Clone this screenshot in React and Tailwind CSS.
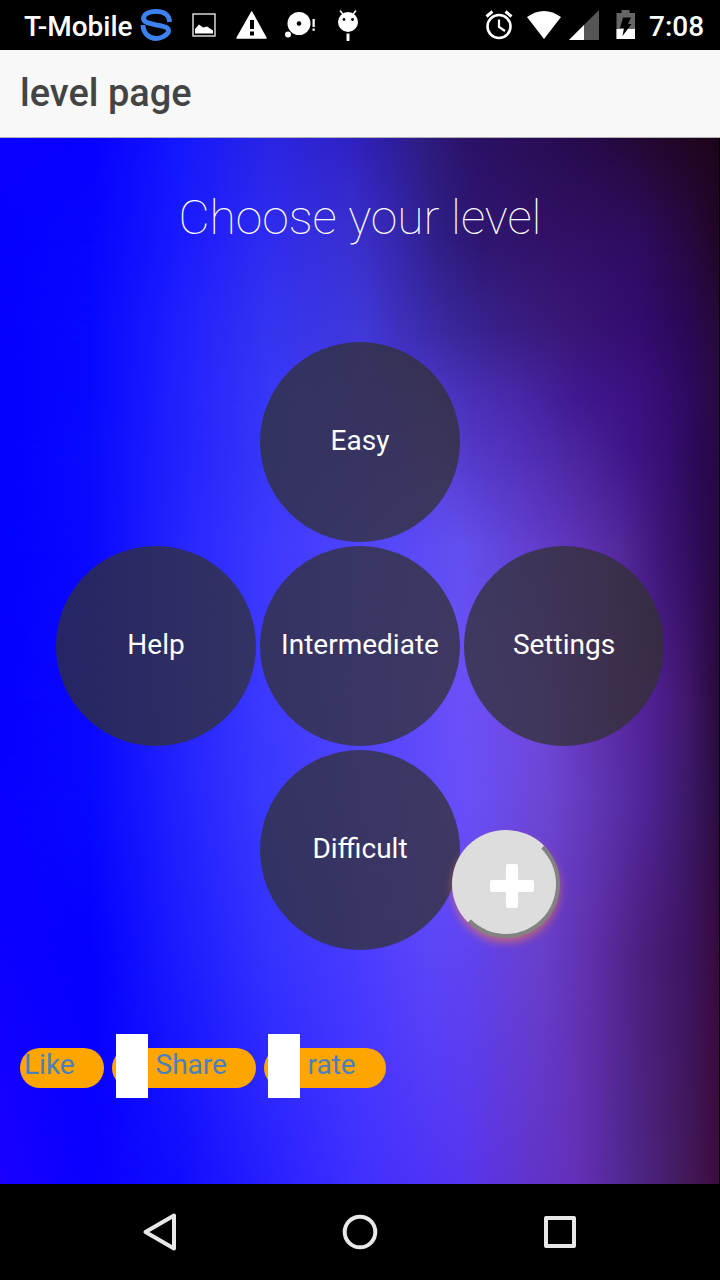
const rows = [
  { from: 0, at: 0, stops: '#0a00ff 0px,#0700ff 90px,#1418ff 180px,#2a25e4 270px,#3022c4 350px,#2e1ea0 390px,#2e1c80 425px,#2b1268 470px,#290d56 540px,#260a48 600px,#240830 650px,#20051f 700px,#1c041a 720px' },
  { from: 0, at: 100, stops: '#0500ff 0px,#0705ff 90px,#1a1aff 180px,#302cf0 270px,#3a30d0 350px,#3628b0 395px,#301f88 435px,#2e1670 480px,#321268 540px,#2e0c60 640px,#280840 690px,#200625 720px' },
  { from: 100, at: 192, stops: '#0500ff 0px,#0808ff 90px,#2020ff 180px,#3535f0 270px,#4038d8 365px,#3f30bc 400px,#3a289c 450px,#382088 500px,#3a1878 560px,#340c70 640px,#2a0855 690px,#260a38 720px' },
  { from: 192, at: 260, stops: '#0300ff 0px,#0808ff 90px,#2222ff 180px,#3838f8 270px,#4838e8 370px,#4c38cc 430px,#4a30b8 470px,#4828a8 520px,#401890 580px,#3c1080 640px,#2e0a60 690px,#280a40 720px' },
  { from: 260, at: 312, stops: '#0300ff 0px,#0a0aff 90px,#2222fe 180px,#3838f8 270px,#4c3cf0 370px,#5840d8 440px,#5438c8 470px,#5030b8 520px,#4a249c 580px,#401488 630px,#360e70 670px,#2a0854 700px,#280840 720px' },
  { from: 312, at: 412, stops: '#0300ff 0px,#0a08ff 90px,#2525ff 180px,#3c38ff 260px,#5045fc 360px,#6350f0 460px,#6242d4 520px,#6035bc 570px,#542a9c 620px,#3f1678 660px,#300c5c 695px,#280840 720px' },
  { from: 412, at: 562, stops: '#0500ff 0px,#0a08ff 90px,#2525ff 180px,#3b38ff 260px,#5345ff 360px,#6b50f8 460px,#7048e0 540px,#6030b0 600px,#4e2090 655px,#421870 685px,#280a38 720px' },
  { from: 562, at: 662, stops: '#0800ff 0px,#0808ff 90px,#2222ff 180px,#3838ff 260px,#5042ff 360px,#6a50f8 470px,#6c45d0 550px,#6035b4 600px,#502498 645px,#3e1a6c 685px,#2a0c40 720px' },
  { from: 662, at: 812, stops: '#0c00ff 0px,#0400ff 90px,#1c1cff 180px,#3433ff 270px,#4a3cff 360px,#5c46f8 430px,#6044f0 470px,#6840cc 540px,#6030ac 590px,#4c2080 640px,#3c1460 690px,#380a3c 720px' },
  { from: 812, at: 1046, stops: '#1a00ff 0px,#0900ff 90px,#100cff 180px,#2820ff 270px,#4030ff 360px,#5535f0 460px,#6034d0 520px,#6430b8 575px,#502890 625px,#441c60 680px,#3c0c3c 720px' },
];

function Backdrop() {
  return (
    <div className="absolute inset-0 -z-10 border-r border-black/70">
      {rows.map((r, i) => {
        const mask = i ? `linear-gradient(to bottom, transparent ${r.from}px, #000 ${r.at}px)` : undefined;
        return (
          <div
            key={r.at}
            className="absolute inset-0"
            style={{ backgroundImage: `linear-gradient(to right, ${r.stops})`, maskImage: mask }}
          />
        );
      })}
    </div>
  );
}

function StatusBar() {
  return (
    <header className="flex h-[50px] shrink-0 items-center bg-black pl-6 text-[28px] font-medium leading-none text-white">
      <span className="w-[116px] whitespace-nowrap pt-1">T-Mobile</span>
      <svg className="h-[34px] w-[34px]" viewBox="0 0 34 34" fill="none" stroke="#3b82ee" strokeWidth="4.800">
        <path d="M29.500 14C29.500 6 23 3.300 16 3.300C8 3.300 3.500 7 3.500 10.500C3.500 14.500 9 15.200 16 16.800C24 18.500 29.300 19 28.500 23.500C27.500 27 21 30.500 16 30.500C9 30.500 3 25 3 17" />
      </svg>
      <svg className="ml-[18px] h-6 w-6" viewBox="0 0 24 24">
        <rect x="1" y="1" width="22" height="22" fill="none" stroke="#d8d8d8" strokeWidth="1.500" />
        <path d="M3 20V16L7 11.500 11 14.500 15 13.500 21 17.500V20.500H3Z" fill="#fff" />
      </svg>
      <svg className="ml-5 h-7 w-8" viewBox="0 0 32 28">
        <path d="M15.700 1 30 27H1Z" fill="#fff" stroke="#fff" strokeWidth="1.500" strokeLinejoin="round" />
        <path d="M14 9h4v9h-4zM14 20.500h4v4h-4z" fill="#000" />
      </svg>
      <svg className="ml-4 h-7 w-8" viewBox="0 0 32 28" fill="#fff">
        <circle cx="15" cy="12.500" r="11.500" />
        <circle cx="15" cy="12.500" r="2.300" fill="#000" />
        <circle cx="4" cy="23.500" r="3" />
        <path d="M28.500 8h2.300v8h-2.300zM28.500 17.500h2.300v2.300h-2.300z" />
      </svg>
      <svg className="ml-5 h-8 w-6" viewBox="0 0 24 32" fill="#fff">
        <circle cx="12" cy="13" r="10" />
        <path d="m4 1.500 4 5M20 1.500l-4 5" stroke="#fff" strokeWidth="1.500" />
        <circle cx="8" cy="10.500" r="1.400" fill="#000" />
        <circle cx="16.500" cy="10.500" r="1.400" fill="#000" />
        <path d="M10.500 24.500h3v7.500h-3z" />
      </svg>
      <svg className="ml-auto h-[30px] w-[30px]" viewBox="0 0 30 30" fill="none" stroke="#fff">
        <circle cx="15" cy="16.500" r="11.500" strokeWidth="2.600" />
        <path d="M15 9.500v7.500l6 4" strokeWidth="2.200" />
        <path d="m2.500 6.500 6-5M27.500 6.500l-6-5" strokeWidth="3" />
      </svg>
      <svg className="ml-3 h-[30px] w-[36px]" viewBox="0 0 36 30">
        <path d="M1 7Q18-5 35 7L18 29Z" fill="#fff" />
      </svg>
      <svg className="ml-[7px] h-[30px] w-[30px]" viewBox="0 0 30 30">
        <path d="M30 0V30H0Z" fill="#555" />
        <path d="M15 15V30H0Z" fill="#fff" />
      </svg>
      <svg className="ml-[17px] h-[30px] w-5" viewBox="0 0 20 30">
        <path d="M5.500 0h8v3h5.500v26H0.500V3h5z" fill="#666" />
        <path d="M.5 19H19v10H.5z" fill="#fff" />
        <path d="M7 7.500h8l-3 6.500h3.500L6.500 26l1.500-8H4z" fill="#000" />
      </svg>
      <span className="ml-[13px] w-[71px] whitespace-nowrap pt-1">7:08</span>
    </header>
  );
}

function Level({ label, className }) {
  return (
    <button className={`size-[200px] rounded-full bg-[#323230]/75 pb-0.5 text-[28px] text-white ${className}`}>
      {label}
    </button>
  );
}

function Pill({ label, className, marker }) {
  return (
    <a className={`flex h-10 items-center rounded-[20px] bg-[#ffa500] pl-1 text-[28px] text-[#4a80bd] ${className}`}>
      {marker && <span className="mb-1 mr-[7.5px] h-16 w-8 shrink-0 bg-white" />}
      <span className="pb-1.5">{label}</span>
    </a>
  );
}

export default function App() {
  return (
    <div className="flex h-[1280px] w-[720px] flex-col overflow-hidden bg-black font-[Roboto,sans-serif]">
      <StatusBar />
      <div className="flex h-[88px] shrink-0 items-center border-b border-[#b2b2b2] bg-[#f8f8f8] pl-5 text-[38px] font-medium text-[#444]">
        <h1 className="pb-px">level page</h1>
      </div>
      <main className="relative isolate flex h-[1046px] shrink-0 flex-col">
        <Backdrop />
        <h2 className="pt-[52px] text-center text-[48px] font-thin leading-[56px] text-white">Choose your level</h2>
        <div className="relative mx-auto mt-24 grid w-[608px] grid-cols-3 gap-1">
          <Level label="Easy" className="col-start-2" />
          <Level label="Help" className="col-start-1" />
          <Level label="Intermediate" className="" />
          <Level label="Settings" className="" />
          <Level label="Difficult" className="col-start-2" />
          <button className="absolute left-[396px] top-[488px] size-[108px] rounded-full border-4 border-b-[#828282] border-l-[#ddd] border-r-[#828282] border-t-[#ddd] bg-[#ddd] pt-1 shadow-[0_5px_10px_-1px_rgba(255,130,60,0.6)]">
            <svg className="ml-[34px] size-11" viewBox="0 0 44 44" fill="#fff">
              <rect x="16" y="0" width="12" height="44" rx="2" />
              <rect x="0" y="16" width="44" height="12" rx="2" />
            </svg>
          </button>
        </div>
        <div className="mt-[98px] flex gap-2 pl-5">
          <Pill label="Like" className="w-[84px]" />
          <Pill label="Share" className="w-[144px]" marker />
          <Pill label="rate" className="w-[122px]" marker />
        </div>
      </main>
      <nav className="flex h-24 items-center">
        <svg className="ml-[140px] size-10" viewBox="0 0 40 40" fill="none" stroke="#e8e8e8" strokeWidth="4" strokeLinejoin="round">
          <path d="M34 3.500V36.500L5.500 20Z" />
        </svg>
        <svg className="ml-40 size-10" viewBox="0 0 40 40" fill="none" stroke="#e8e8e8" strokeWidth="4">
          <circle cx="20" cy="20" r="15.300" />
        </svg>
        <svg className="ml-40 size-10" viewBox="0 0 40 40" fill="none" stroke="#e8e8e8" strokeWidth="4" strokeLinejoin="round">
          <rect x="6" y="6" width="28" height="28" />
        </svg>
      </nav>
    </div>
  );
}
